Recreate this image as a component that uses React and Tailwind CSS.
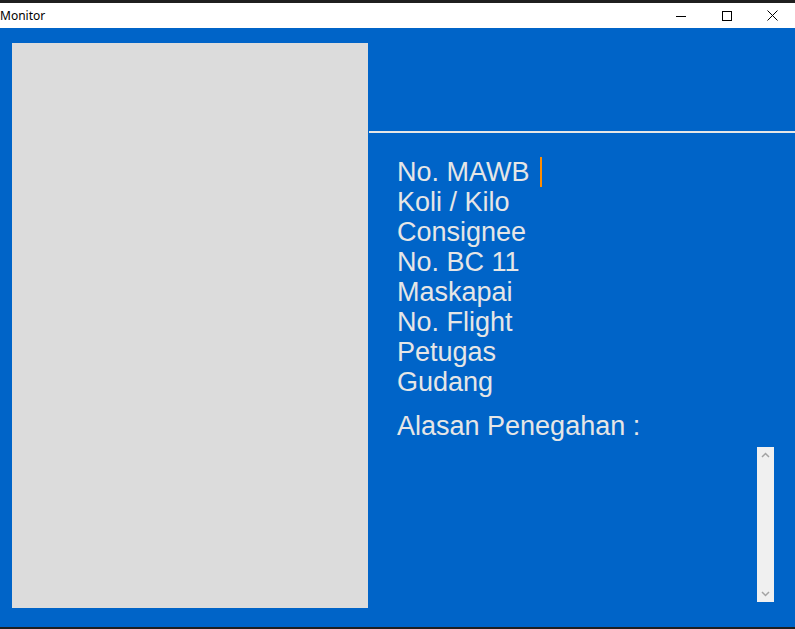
import React from 'react';

const fields = ['No. MAWB', 'Koli / Kilo', 'Consignee', 'No. BC 11', 'Maskapai', 'No. Flight', 'Petugas', 'Gudang'];

const MonitorWindow = () => {
  return (
    <div className="w-[795px] h-[629px] flex flex-col bg-[#0064c8] overflow-hidden" style={{ fontFamily: '"Liberation Sans", Arial, sans-serif' }}>
      {/* Top edge */}
      <div className="h-[3px] bg-[#1f1f1f]" />

      {/* Title bar */}
      <div className="h-[25px] bg-white flex items-center justify-between">
        <span className="text-[12px] text-black pl-0 leading-none" style={{ fontFamily: '"Noto Sans", "Liberation Sans", sans-serif' }}>Monitor</span>
        <div className="flex items-center h-full">
          <div className="w-[46px] h-full flex items-center justify-center">
            <svg width="10" height="10" viewBox="0 0 10 10">
              <path d="M0 5.5h10" stroke="#000" strokeWidth="1" />
            </svg>
          </div>
          <div className="w-[45px] h-full flex items-center justify-center">
            <svg width="10" height="10" viewBox="0 0 10 10">
              <rect x="0.5" y="0.5" width="9" height="9" fill="none" stroke="#000" strokeWidth="1" />
            </svg>
          </div>
          <div className="w-[46px] h-full flex items-center justify-center">
            <svg width="11" height="11" viewBox="0 0 11 11">
              <path d="M0.5 0.5l10 10M10.5 0.5l-10 10" stroke="#000" strokeWidth="1" />
            </svg>
          </div>
        </div>
      </div>

      {/* Body */}
      <div className="flex-1 flex border-b-[2px] border-[#1f1f1f]">
        {/* Photo panel */}
        <div className="pl-[12px] pt-[15px]">
          <div className="w-[356px] h-[565px] bg-[#dcdcdc]" />
        </div>

        {/* Details */}
        <div className="flex-1 ml-[1px] flex flex-col">
          <div className="h-[103px]" />
          <div className="h-[2px] bg-[#e6e6e6]" />
          <div className="pl-[28px] pt-[24px] text-[27px] leading-[30px] text-[#e6e6e6]">
            {fields.map((label, i) => (
              <div key={label} className="flex items-start h-[30px] whitespace-nowrap">
                <span>{label}</span>
                {i === 0 && <span className="inline-block w-[2px] h-[30px] bg-[#ff8c00] ml-[10px]" />}
              </div>
            ))}
            <div className="mt-[14px] h-[30px] whitespace-nowrap">Alasan Penegahan :</div>
          </div>
          <div className="flex justify-end pr-[21px] mt-[6px]">
            <div className="w-[17px] h-[155px] bg-[#f0f0f0] flex flex-col items-center justify-between py-[5px]">
              <svg width="9" height="6" viewBox="0 0 9 6">
                <path d="M1 5l3.5-3.5L8 5" fill="none" stroke="#a3a3a3" strokeWidth="1.5" />
              </svg>
              <svg width="9" height="6" viewBox="0 0 9 6">
                <path d="M1 1l3.5 3.5L8 1" fill="none" stroke="#a3a3a3" strokeWidth="1.5" />
              </svg>
            </div>
          </div>
        </div>
      </div>
    </div>
  );
};

export default function App() {
  return <MonitorWindow />;
}
